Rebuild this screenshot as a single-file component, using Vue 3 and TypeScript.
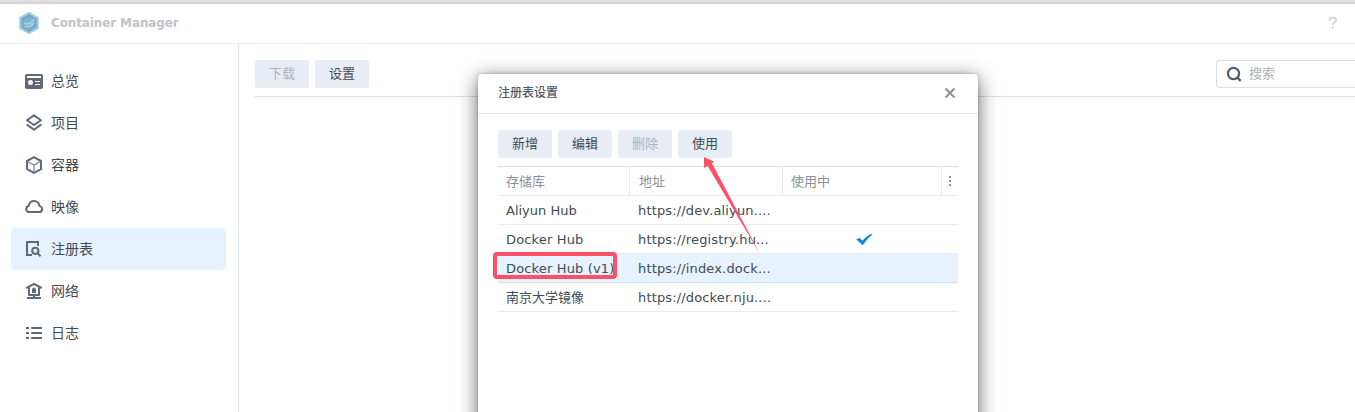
<script setup lang="ts">
import { ref } from 'vue'

interface NavItem {
  id: string
  label: string
}

interface Registry {
  name: string
  url: string
  used: boolean
}

const navItems: NavItem[] = [
  { id: 'overview', label: '总览' },
  { id: 'project', label: '项目' },
  { id: 'container', label: '容器' },
  { id: 'image', label: '映像' },
  { id: 'registry', label: '注册表' },
  { id: 'network', label: '网络' },
  { id: 'log', label: '日志' },
]
const activeNav = ref('registry')

const registries: Registry[] = [
  { name: 'Aliyun Hub', url: 'https://dev.aliyun....', used: false },
  { name: 'Docker Hub', url: 'https://registry.hu...', used: true },
  { name: 'Docker Hub (v1)', url: 'https://index.dock...', used: false },
  { name: '南京大学镜像', url: 'https://docker.nju....', used: false },
]
const selected = ref(2)
</script>

<template>
  <div class="window">
    <header class="titlebar">
      <svg class="logo" width="22" height="24" viewBox="0 0 22 24">
        <path d="M11 .8 20.8 6.3v11.4L11 23.2 1.2 17.7V6.3z" fill="#9bd0f3" />
        <path d="M11 3 18.8 7.4v9.2L11 21 3.2 16.6V7.4z" fill="#84a3bf" />
        <path d="M5.5 9.8 11 6.500l5.500 2.500v5.500L11 18l-5.500-3z" fill="#7db3d4" />
        <path d="M6 12.200c3 1.600 7 .3 10-3.500" fill="none" stroke="#a9dcf1" stroke-width="1.200" />
        <path d="M6.500 15.500c4 1 7-.5 9.500-3.500" fill="none" stroke="#a9dcdf" stroke-width="1.200" />
      </svg>
      <span class="title">Container Manager</span>
      <svg class="help" width="10" height="14" viewBox="0 0 10 14">
        <path d="M1.600 4.700V3.600q0-1.900 2-1.900h2.300q2 0 2 1.900v.6q0 1.200-1.200 1.900Q4.900 7 4.900 8.400v.6" fill="none" stroke="#d3d5d8" stroke-width="2" />
        <rect x="3.900" y="10.600" width="2" height="2" fill="#d3d5d8" />
      </svg>
    </header>

    <div class="body">
      <nav class="sidebar">
        <a
          v-for="item in navItems"
          :key="item.id"
          class="nav-item"
          :class="{ active: item.id === activeNav }"
          @click="activeNav = item.id"
        >
          <svg class="nav-icon" width="18" height="18" viewBox="0 0 18 18">
            <template v-if="item.id === 'overview'">
              <rect x="0" y="2" width="18" height="15" rx="1.800" fill="#606a76" />
              <path d="M2 5h14" stroke="#fff" stroke-width="2" />
              <circle cx="5.500" cy="10.500" r="2.500" fill="#fff" />
              <path d="M10 9.500h5M10 12.500h5" stroke="#fff" stroke-width="1" />
            </template>
            <g v-else-if="item.id === 'project'" class="line">
              <path d="M9 1.400 16 6.200 9 11 2 6.200z" />
              <path d="M1.700 10.400 9 15.800l7.300-5.400" />
            </g>
            <template v-else-if="item.id === 'container'">
              <path class="line" d="M9 1.200 16 5v8.200l-7 3.700-7-3.700V5z" />
              <path class="thin" d="M3 5.800 9 9l6-3.200M9 9v7" />
            </template>
            <path
              v-else-if="item.id === 'image'"
              class="line"
              d="M4 14.100a3.100 3.100 0 0 1-.4-6.100C4.200 5 6.300 3 9 3c2.900 0 5.200 2.200 5.400 4.900 1.700.5 2.700 1.700 2.700 3.200 0 1.800-1.300 3-3.100 3z"
            />
            <template v-else-if="item.id === 'registry'">
              <path class="line square" d="M7 15H2V2h11v4" />
              <circle class="line" cx="10.300" cy="10.800" r="3.100" />
              <path class="line square" d="M12.600 13.200 15.600 16.200" />
            </template>
            <template v-else-if="item.id === 'network'">
              <path class="line" d="M1.200 6.200 9 1.800l7.800 4.400M4 5.500V13h10V5.500" />
              <path d="M9 5.300 11 7v4H7V7z" fill="#606a76" />
              <path class="line" d="M2 16h14M9 13v3" />
            </template>
            <path v-else class="line" d="M1 4h3M6.200 4H17M1 9h3M6.200 9H17M1 14h3M6.200 14H17" />
          </svg>
          <span>{{ item.label }}</span>
        </a>
      </nav>

      <main class="content">
        <div class="toolbar">
          <button class="btn" disabled>下载</button>
          <button class="btn">设置</button>
          <div class="search">
            <svg width="16" height="16" viewBox="0 0 16 16">
              <circle cx="7.500" cy="7.500" r="5.600" fill="none" stroke="#505c69" stroke-width="2.200" />
              <path d="m11 11.200 3.600 3.700" stroke="#505c69" stroke-width="2.400" />
            </svg>
            <span>搜索</span>
          </div>
        </div>
      </main>
    </div>

    <section class="dialog">
      <header class="dialog-head">
        <h2>注册表设置</h2>
        <svg width="12" height="12" viewBox="0 0 12 12">
          <path d="m1.500 1.500 9 9m0-9-9 9" stroke="#91979e" stroke-width="2.300" />
        </svg>
      </header>
      <div class="dialog-body">
        <div class="actions">
          <button class="btn">新增</button>
          <button class="btn">编辑</button>
          <button class="btn" disabled>删除</button>
          <button class="btn">使用</button>
        </div>
        <div class="grid">
          <div class="row head">
            <span>存储库</span>
            <span>地址</span>
            <span>使用中</span>
            <span class="more">
              <svg width="2" height="10" viewBox="0 0 2 10">
                <path d="M0 0h2v2H0zM0 4h2v2H0zM0 8h2v2H0z" fill="#8b9199" />
              </svg>
            </span>
          </div>
          <div
            v-for="(item, index) in registries"
            :key="item.name"
            class="row"
            :class="{ selected: index === selected }"
            @click="selected = index"
          >
            <span :class="{ latin: item.name.startsWith('Docker') }">{{ item.name }}</span>
            <span class="latin">{{ item.url }}</span>
            <span class="status">
              <svg v-if="item.used" width="17" height="13" viewBox="0 0 17 13">
                <path d="M.2 6.300 3.600 5l2.900 2.700Q10.300 2.700 16.300.4v1.200Q11.300 5.500 6.600 12.300z" fill="#0a86e8" />
              </svg>
            </span>
          </div>
        </div>
      </div>
      <div class="marker"></div>
      <svg class="arrow" width="60" height="100" viewBox="0 0 60 100">
        <path d="M4 1v11l3.500-2.200L60 98 12 7.200 14 5.500z" fill="#fe5064" />
      </svg>
    </section>
  </div>
</template>

<style>
body {
  overflow: hidden;
}
</style>

<style scoped>
.window {
  position: relative;
  box-sizing: border-box;
  height: 412px;
  padding-top: 4px;
  overflow: hidden;
  display: flex;
  flex-direction: column;
  background: linear-gradient(#e2e2e2, #cfcfcf 4px, #fff 4px);
  color: #414b55;
  font: 13px/20px "DejaVu Sans", "Noto Sans CJK SC", sans-serif;
}

.titlebar {
  height: 39px;
  flex: none;
  display: flex;
  align-items: center;
  padding: 0 17px 0 18px;
  border-bottom: 1px solid #f0f1f4;
  background: #fff;
  border-top-left-radius: 3px;
}

.logo,
.help {
  position: relative;
  top: -1px;
}

.title {
  margin: 0 0 2px 11px;
  font-size: 12px;
  font-weight: bold;
  letter-spacing: -0.12px;
  color: #c0c3c7;
}

.help {
  margin-left: auto;
}

.body {
  flex: 1;
  display: flex;
}

.sidebar {
  box-sizing: border-box;
  width: 239px;
  padding: 16px 12px 0 11px;
  border-right: 1px solid #dfe5ed;
}

.nav-item {
  height: 42px;
  display: flex;
  align-items: center;
  gap: 8px;
  padding-left: 14px;
  border-radius: 5px;
  font-size: 14px;
}

.nav-item.active {
  background: #e6f2ff;
}

.line {
  fill: none;
  stroke: #606a76;
  stroke-width: 2;
  stroke-linejoin: round;
}

.square {
  stroke-linejoin: miter;
}

.thin {
  fill: none;
  stroke: #7a838d;
  stroke-width: 1.2;
}

.content {
  flex: 1;
  padding: 16px 0 0 16px;
}

.toolbar {
  display: flex;
  gap: 6px;
  padding-bottom: 8px;
  border-bottom: 1px solid #d3dfeb;
}

.btn {
  width: 54px;
  height: 28px;
  padding: 0;
  border: 0;
  border-radius: 3px;
  background: #e8edf5;
  color: #414b55;
  font: inherit;
}

.btn:disabled {
  color: #adb3bb;
}

.search {
  box-sizing: border-box;
  width: 139px;
  height: 28px;
  margin-left: auto;
  display: flex;
  align-items: center;
  gap: 7px;
  padding-left: 9px;
  border: 1px solid #d3dfeb;
  border-right: 0;
  border-radius: 4px 0 0 4px;
  color: #adb1b6;
}

.dialog {
  position: absolute;
  left: 478px;
  top: 74px;
  width: 500px;
  height: 380px;
  border-radius: 3px;
  background: #fff;
  box-shadow: 0 4px 20px rgba(0, 0, 0, 0.6), 0 0 3px rgba(0, 0, 0, 0.25);
}

.dialog-head {
  height: 39px;
  display: flex;
  align-items: center;
  justify-content: space-between;
  padding: 0 22px 0 20px;
  border-bottom: 1px solid #dfe6ee;
}

.dialog-head h2 {
  margin: 0 0 2px;
  font-size: 12px;
  font-weight: 500;
  color: #505a64;
}

.dialog-head svg {
  margin-bottom: 1px;
}

.dialog-body {
  padding: 16px 20px;
}

.actions {
  display: flex;
  gap: 6px;
  margin-bottom: 8px;
}

.grid {
  border-top: 1px solid #d3dfeb;
}

.row {
  box-sizing: border-box;
  height: 29px;
  display: grid;
  grid-template-columns: 132px 153px 159px 16px;
  border-bottom: 1px solid #e8ecf2;
  line-height: 30px;
  white-space: nowrap;
}

.row > span {
  height: 28px;
  padding-left: 8px;
}

.latin {
  letter-spacing: 0.15px;
}

.row.head {
  color: #8b9199;
}

.row.head > span + span {
  border-left: 1px solid #e3e8ef;
  margin-left: -1px;
}

.row.head > span:nth-child(2) {
  padding-left: 9px;
}

.row.head > .more.more {
  display: flex;
  align-items: center;
  justify-content: center;
  padding: 0;
}

.row.selected {
  background: #e6f2ff;
  border-bottom-color: #d3dfeb;
}

.row > .status {
  display: flex;
  align-items: center;
  justify-content: center;
  padding: 0 0 0 3px;
}

.marker {
  position: absolute;
  left: 15px;
  top: 178px;
  box-sizing: border-box;
  width: 124px;
  height: 27px;
  border: 4px solid #fe5064;
  border-radius: 4px;
}

.arrow {
  position: absolute;
  left: 222px;
  top: 82px;
}
</style>
